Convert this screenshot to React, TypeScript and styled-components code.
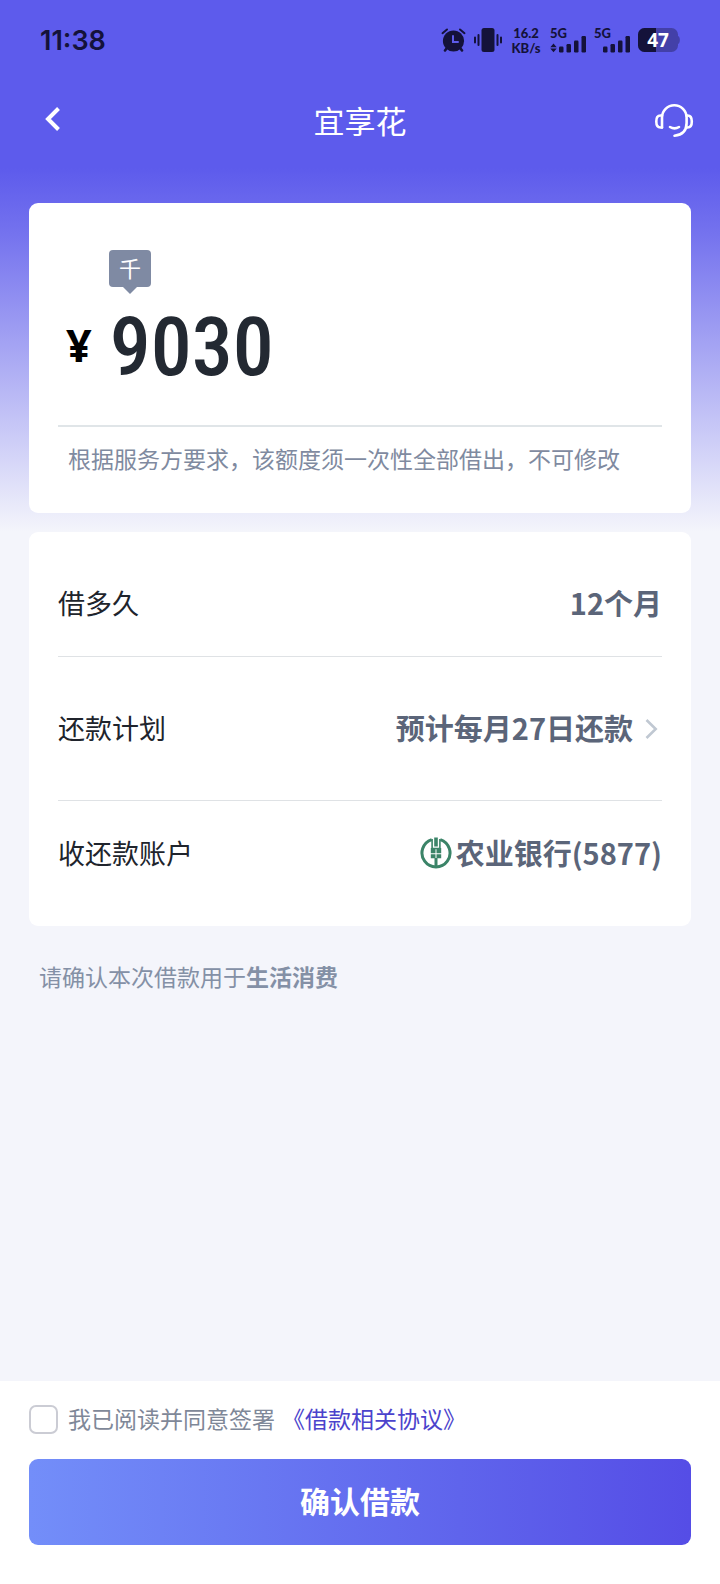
import React, { useState } from 'react';
import styled, { createGlobalStyle } from 'styled-components';

const GlobalStyle = createGlobalStyle`
  *, *::before, *::after { box-sizing: border-box; }
  body {
    margin: 0;
    background: #f4f5fb;
    font-family: "Noto Sans CJK SC", "Noto Sans", sans-serif;
    color: #20242c;
  }
  button {
    margin: 0;
    padding: 0;
    border: 0;
    background: none;
    font: inherit;
    color: inherit;
    cursor: pointer;
  }
`;

const Page = styled.div`
  min-height: 100vh;
  display: flex;
  flex-direction: column;
  background: linear-gradient(
    to bottom,
    #5d5bec 0,
    #5d5bec 168px,
    #7371ee 230px,
    #f4f5fb 532px
  );
`;

const StatusBar = styled.div`
  height: 80px;
  padding: 0 40px;
  display: flex;
  align-items: center;
  justify-content: space-between;
  color: #14123a;
  font-family: Inter, "Noto Sans", sans-serif;
`;

const Clock = styled.time`
  padding-top: 2px;
  font-size: 27px;
  line-height: 32px;
  font-weight: 600;
`;

const StatusIcons = styled.div`
  display: flex;
  align-items: center;
  gap: 8px;
`;

const NetSpeed = styled.div`
  width: 32px;
  padding-top: 2px;
  display: flex;
  flex-direction: column;
  align-items: center;
  font-family: Lato, sans-serif;
  font-size: 13px;
  line-height: 15px;
  font-weight: 900;
  white-space: nowrap;
`;

const SignalBox = styled.div`
  position: relative;
  width: 36px;
  height: 26px;
`;

const SignalLabel = styled.span`
  position: absolute;
  left: 0;
  top: 0;
  font-family: Lato, sans-serif;
  font-size: 13px;
  line-height: 12px;
  font-weight: 900;
`;

const BatteryBox = styled.div`
  position: relative;
  width: 42px;
  height: 24px;
`;

const BatteryLevel = styled.span`
  position: absolute;
  inset: 0 2px 0 0;
  color: #fff;
  font-family: "Noto Sans", sans-serif;
  font-size: 19px;
  line-height: 24px;
  font-weight: 700;
  text-align: center;
`;

const NavBar = styled.header`
  height: 80px;
  padding: 0 26px;
  display: grid;
  grid-template-columns: 1fr auto 1fr;
  align-items: center;
  color: #fff;
`;

const Title = styled.h1`
  margin: 0;
  font-size: 31px;
  line-height: 40px;
  font-weight: 400;
`;

const IconButton = styled.button<{ $end?: boolean }>`
  display: flex;
  justify-self: ${(p) => (p.$end ? 'end' : 'start')};
  padding-left: ${(p) => (p.$end ? 0 : 13)}px;
`;

const Main = styled.main`
  flex: 1;
  padding: 43px 29px 24px;
`;

const Card = styled.section`
  padding: 20px 29px;
  border-radius: 9px;
  background: #fff;
`;

const AmountCard = styled(Card)`
  height: 310px;
  margin-bottom: 19px;
  padding-top: 47px;
`;

const UnitTag = styled.div`
  position: relative;
  width: 42px;
  height: 37px;
  margin-left: 51px;
  border-radius: 4px;
  background: #7f8aa3;
  color: #fff;
  font-size: 22px;
  line-height: 34px;
  text-align: center;

  &::after {
    content: "";
    position: absolute;
    left: 14px;
    top: 100%;
    border: 7px solid transparent;
    border-top-color: #7f8aa3;
    border-bottom: 0;
  }
`;

const Amount = styled.div`
  height: 140px;
  padding: 0 8px 22px;
  display: flex;
  align-items: center;
  gap: 18px;
  border-bottom: 2px solid #e0e5e8;
`;

const Currency = styled.span`
  color: #000;
  font-family: "Noto Sans", sans-serif;
  font-size: 45px;
  line-height: 60px;
  font-weight: 700;
`;

const Figure = styled.span`
  padding-top: 4px;
  color: #232932;
  font-family: "Roboto Condensed", Roboto, sans-serif;
  font-size: 82px;
  line-height: 88px;
  font-weight: 500;
`;

const AmountNote = styled.p`
  margin: 0;
  padding: 15px 0 0 10px;
  color: #7f8aa0;
  font-size: 23px;
  line-height: 32px;
`;

const Row = styled.div<{ $tall?: boolean }>`
  height: ${(p) => (p.$tall ? 144 : 105)}px;
  padding-bottom: 2px;
  display: flex;
  align-items: center;
  justify-content: space-between;

  &:not(:last-child) {
    border-bottom: 1px solid #dfe2e5;
  }

  svg {
    margin-top: 3px;
  }
`;

const Label = styled.span`
  font-size: 27px;
  line-height: 36px;
`;

const Value = styled.span`
  display: flex;
  align-items: center;
  gap: 4px;
  padding-bottom: 2px;
  color: #5b6579;
  font-size: 29px;
  line-height: 36px;
  font-weight: 700;
`;

const PlanButton = styled.button`
  display: flex;
  align-items: center;
  gap: 12px;
  padding-right: 4px;
`;

const Purpose = styled.p`
  margin: 0;
  padding: 34px 10px 0;
  color: #8490a6;
  font-size: 23px;
  line-height: 32px;
`;

const Footer = styled.footer`
  padding: 20px 29px 39px;
  background: #fff;
`;

const Agreement = styled.div`
  margin-bottom: 24px;
  display: flex;
  align-items: center;
  color: #7f8898;
  font-size: 23px;
  line-height: 34px;
`;

const AgreeLabel = styled.label`
  display: flex;
  align-items: center;
  gap: 10px;
`;

const Checkbox = styled.input`
  appearance: none;
  width: 29px;
  height: 29px;
  margin: 2px 0 0;
  border: 2px solid #cbccd4;
  border-radius: 7px;
  background: #fff;

  &:checked {
    border-color: #5650e6;
    background: #5650e6;
  }
`;

const AgreementLink = styled.a`
  margin-left: 7px;
  color: #4b43cc;
  text-decoration: none;
`;

const SubmitButton = styled.button`
  width: 100%;
  height: 86px;
  padding-bottom: 4px;
  border-radius: 9px;
  background: linear-gradient(to right, #738ef9, #5f64ec 65%, #554de6);
  color: #fff;
  font-size: 30px;
  line-height: 40px;
  font-weight: 700;
`;

const AlarmIcon = () => (
  <svg width="25" height="24" viewBox="0 0 25 24" fill="none" stroke="currentColor" strokeLinecap="round">
    <circle cx="12.5" cy="13" r="10.6" fill="currentColor" stroke="none" />
    <path d="M1.500 5.200 6 1.500M23.500 5.200 19 1.500" strokeWidth="2" />
    <path d="M5.500 20.500 4 22.500M19.500 20.500l1.500 2" strokeWidth="2.6" />
    <path d="M12 8v6h5" stroke="#5d5bec" strokeWidth="2" />
  </svg>
);

const VibrateIcon = () => (
  <svg width="28" height="24" viewBox="0 0 28 24" fill="none" stroke="currentColor" strokeWidth="2" strokeLinecap="round">
    <rect x="7.5" y="0" width="13" height="24" rx="2.5" fill="currentColor" stroke="none" />
    <path d="M1 9.500v5M4.500 7v10M23.500 7v10M27 9.500v5" />
  </svg>
);

const Signal = ({ active }: { active?: boolean }) => (
  <SignalBox>
    <SignalLabel>5G</SignalLabel>
    <svg width="36" height="26" viewBox="0 0 36 26" fill="currentColor">
      {active && <path d="M3.500 16.500 6.700 20.200H.3zM3.500 25.200.3 21.500h6.400z" />}
      <rect x="9" y="19.500" width="4.500" height="6" rx="1.200" />
      <rect x="16.500" y="17" width="4.500" height="8.500" rx="1.200" />
      <rect x="24" y="13.500" width="4.500" height="12" rx="1.200" />
      <rect x="31.500" y="9" width="4.500" height="16.500" rx="1.200" />
    </svg>
  </SignalBox>
);

const Battery = ({ level }: { level: number }) => (
  <BatteryBox>
    <svg width="42" height="24" viewBox="0 0 42 24">
      <rect width="40" height="24" rx="6.500" fill="#4340a8" />
      <path d="M40 8c2.500 1 2.500 7 0 8z" fill="#4340a8" />
      <path d="M18 0H6.500A6.500 6.500 0 0 0 0 6.500v11A6.500 6.500 0 0 0 6.500 24H18z" fill="#14123a" />
    </svg>
    <BatteryLevel>{level}</BatteryLevel>
  </BatteryBox>
);

const BackIcon = () => (
  <svg width="26" height="28" viewBox="0 0 26 28" fill="none" stroke="currentColor" strokeWidth="4">
    <path d="M19.500 2.500 9 13 19.500 23.500" />
  </svg>
);

const HeadsetIcon = () => (
  <svg width="40" height="36" viewBox="0 0 40 36" fill="none" stroke="currentColor" strokeWidth="2.600" strokeLinecap="round" strokeLinejoin="round">
    <path d="M8 25.500V15.500a12.300 12.300 0 0 1 24.600 0V21c0 8-5 12-12.100 12.700" />
    <path d="M8 13.500H6.500C3.500 13.500 2.300 15.500 2.300 19.500s1.200 6 4.200 6H8" />
    <path d="M32.600 13.500h1c3 0 4.200 2 4.200 6s-1.200 6-4.200 6h-1.600" />
    <path d="M16 25c2.500 1.500 6.500 1.500 9 0" />
  </svg>
);

const ChevronIcon = () => (
  <svg width="13" height="22" viewBox="0 0 13 22" fill="none" stroke="#c0c8d2" strokeWidth="2.600">
    <path d="M1.500 2 10.700 11l-9.200 9" />
  </svg>
);

const BankLogo = () => (
  <svg width="32" height="32" viewBox="0 0 31 32" fill="none" stroke="#3b8468">
    <path d="M11.200 2.600A14 14 0 1 0 19.800 2.600" strokeWidth="3" />
    <path d="M15.500.5v9" strokeWidth="3.600" />
    <path d="M11.600 2v9.500h7.800V2" strokeWidth="1.600" />
    <path d="M10.300 11h4.700v5.300h-4.700zM16 11h4.700v5.300h-4.700zM10.300 17.200h4.700v4h-4.700zM16 17.200h4.700v4h-4.700z" fill="#3b8468" stroke="none" />
    <path d="M15.500 21v9" strokeWidth="3" />
  </svg>
);

export default function App() {
  const [agreed, setAgreed] = useState(false);

  return (
    <>
      <GlobalStyle />
      <Page>
        <StatusBar>
          <Clock>11:38</Clock>
          <StatusIcons>
            <AlarmIcon />
            <VibrateIcon />
            <NetSpeed>
              <span>16.2</span>
              <span>KB/s</span>
            </NetSpeed>
            <Signal active />
            <Signal />
            <Battery level={47} />
          </StatusIcons>
        </StatusBar>
        <NavBar>
          <IconButton type="button" aria-label="返回">
            <BackIcon />
          </IconButton>
          <Title>宜享花</Title>
          <IconButton type="button" aria-label="客服" $end>
            <HeadsetIcon />
          </IconButton>
        </NavBar>
        <Main>
          <AmountCard>
            <UnitTag>千</UnitTag>
            <Amount>
              <Currency>¥</Currency>
              <Figure>9030</Figure>
            </Amount>
            <AmountNote>根据服务方要求，该额度须一次性全部借出，不可修改</AmountNote>
          </AmountCard>
          <Card>
            <Row>
              <Label>借多久</Label>
              <Value>12个月</Value>
            </Row>
            <Row $tall>
              <Label>还款计划</Label>
              <PlanButton type="button">
                <Value>预计每月27日还款</Value>
                <ChevronIcon />
              </PlanButton>
            </Row>
            <Row>
              <Label>收还款账户</Label>
              <Value>
                <BankLogo />
                农业银行(5877)
              </Value>
            </Row>
          </Card>
          <Purpose>
            请确认本次借款用于<strong>生活消费</strong>
          </Purpose>
        </Main>
        <Footer>
          <Agreement>
            <AgreeLabel>
              <Checkbox type="checkbox" checked={agreed} onChange={(e) => setAgreed(e.target.checked)} />
              我已阅读并同意签署
            </AgreeLabel>
            <AgreementLink href="#agreement">《借款相关协议》</AgreementLink>
          </Agreement>
          <SubmitButton type="button">确认借款</SubmitButton>
        </Footer>
      </Page>
    </>
  );
}
